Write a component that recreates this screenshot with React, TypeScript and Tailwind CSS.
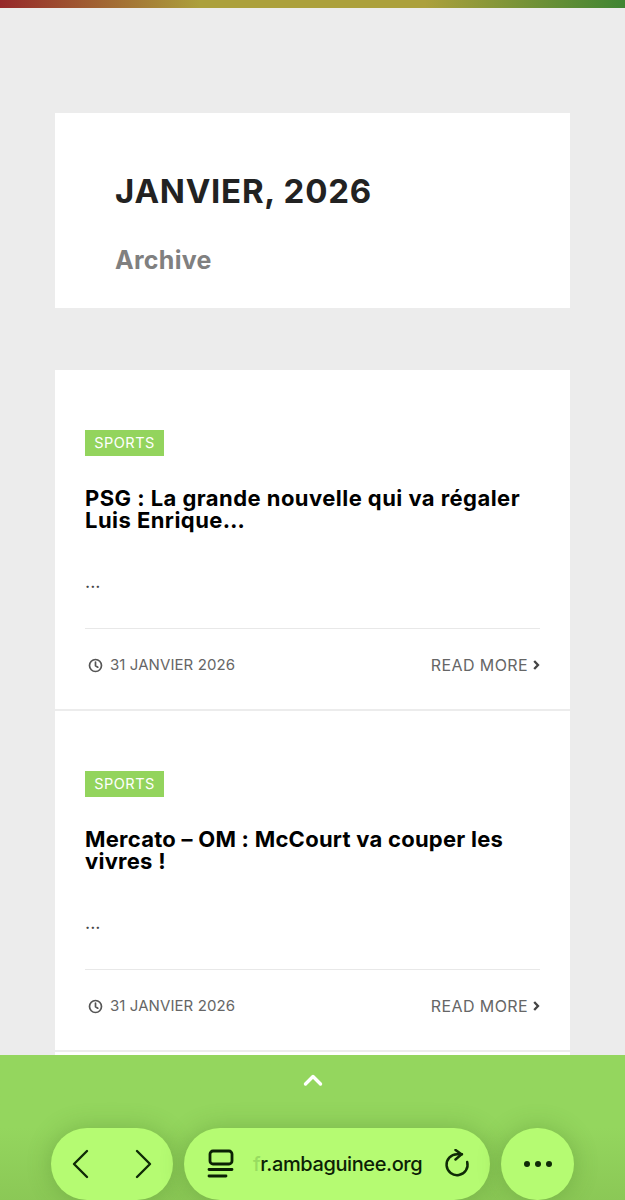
import React from "react";

const sans = "font-['Inter','Liberation_Sans',sans-serif]";

function Clock() {
  return (
    <svg width="15" height="15" viewBox="0 0 15 15" fill="none" stroke="#555" strokeWidth="1.7" strokeLinecap="round" strokeLinejoin="round">
      <circle cx="7.5" cy="7.5" r="6" />
      <path d="M7.5 4.2V7.8L9.8 9.2" />
    </svg>
  );
}

function Article({ title }: { title: React.ReactNode }) {
  return (
    <article className="h-[341px] border-b-2 border-[#ececec] px-[30px] pt-[60px] box-border">
      <span className="flex h-[26px] w-[79px] items-center justify-center bg-[#93d45d] text-[14.5px] tracking-[0.5px] text-white">SPORTS</span>
      {title}
      <p className="mt-[39px] h-[24px] text-[18px] leading-[24px] text-[#444]">...</p>
      <div className="mt-[34px] flex h-[73px] items-center justify-between border-t border-[#e8e8e8] pl-[3px] text-[#666]">
        <div className="flex items-center gap-[7px] pt-[1px] text-[15px] tracking-[0.08px]">
          <Clock />
          <span>31 JANVIER 2026</span>
        </div>
        <div className="flex items-center gap-[5px]">
          <span className="text-[16px] tracking-[0.4px]">READ MORE</span>
          <svg width="7" height="10" viewBox="0 0 7 10" fill="none" stroke="#444" strokeWidth="2.3"><path d="M1.2 1L5 5L1.2 9" /></svg>
        </div>
      </div>
    </article>
  );
}

export default function App() {
  return (
    <div className={`flex h-[1200px] w-[625px] flex-col overflow-hidden bg-[#ececec] ${sans}`}>
      <div className="h-[8px] shrink-0 bg-[linear-gradient(90deg,#96282a_0%,#aca03c_32%,#aca03c_68%,#3f8532_100%)]" />
      <main className="min-h-0 flex-1 overflow-hidden px-[55px] pt-[105px]">
        <section className="h-[195px] bg-white pl-[60px] pt-[58px]">
          <h1 className="text-[33px] font-bold leading-[40px] tracking-[0.75px] text-[#222]">JANVIER, 2026</h1>
          <p className="mt-[34px] text-[25px] font-bold leading-[30px] tracking-[0.3px] text-[#808080]">Archive</p>
        </section>
        <section className="mt-[62px] bg-white pb-[20px]">
          <Article title={<h2 className="mt-[31px] h-[44px] text-[22px] font-bold leading-[22px] tracking-[0.45px] text-black">PSG : La grande nouvelle qui va régaler<br />Luis Enrique…</h2>} />
          <Article title={<h2 className="mt-[31px] h-[44px] text-[22px] font-bold leading-[22px] tracking-[0.25px] text-black">Mercato – OM : McCourt va couper les<br />vivres !</h2>} />
        </section>
      </main>
      <footer className="flex h-[145px] shrink-0 flex-col items-center bg-gradient-to-b from-[#94d65e] via-[#94d65e] to-[#8bc856] px-[51px]">
        <svg className="mt-[18px]" width="20" height="14" viewBox="0 0 20 14" fill="none" stroke="#fff" strokeWidth="3.4" strokeLinecap="round" strokeLinejoin="round">
          <path d="M2.5 11L10 3.5L17.5 11" />
        </svg>
        <div className="mt-[41px] flex w-full items-start gap-[11px]">
          <div className="flex h-[72px] w-[122px] items-center justify-between rounded-[36px] bg-[#b5fb72] px-[20px] shadow-[0_0_24px_rgba(60,110,30,0.3)]">
            <svg width="20" height="30" viewBox="0 0 20 30" fill="none" stroke="#0f2a06" strokeWidth="2.4" strokeLinecap="round" strokeLinejoin="round"><path d="M16 2L3 15L16 28" /></svg>
            <svg width="20" height="30" viewBox="0 0 20 30" fill="none" stroke="#0f2a06" strokeWidth="2.4" strokeLinecap="round" strokeLinejoin="round"><path d="M4 2L17 15L4 28" /></svg>
          </div>
          <div className="flex h-[72px] flex-1 items-center rounded-[36px] bg-[#b5fb72] pl-[23px] pr-[20px] shadow-[0_0_24px_rgba(60,110,30,0.3)]">
            <svg width="28" height="30" viewBox="0 0 28 30" fill="none" stroke="#0b2004" strokeWidth="2.8" strokeLinecap="round">
              <rect x="3" y="2" width="22" height="13" rx="3" />
              <path d="M2 20.5H25M2 27H19" />
            </svg>
            <span className="ml-[18px] flex-1 text-[20px] font-medium tracking-[-0.4px] text-[#0c1f05]">
              <span className="text-[#98dc60]">f</span>r.ambaguinee.org
            </span>
            <svg width="26" height="30" viewBox="0 0 26 30" fill="none" stroke="#0f2a06" strokeWidth="2.5" strokeLinecap="round" strokeLinejoin="round">
              <path d="M23.2 13A10.5 10.5 0 1 1 13 5.2H18" />
              <path d="M11.5 1L17.5 5.3L11.5 10.5" />
            </svg>
          </div>
          <div className="flex h-[72px] w-[73px] items-center justify-center gap-[5px] rounded-[36px] bg-[#b5fb72] shadow-[0_0_24px_rgba(60,110,30,0.3)]">
            <span className="h-[6px] w-[6px] rounded-full bg-[#0f2a06]" />
            <span className="h-[6px] w-[6px] rounded-full bg-[#0f2a06]" />
            <span className="h-[6px] w-[6px] rounded-full bg-[#0f2a06]" />
          </div>
        </div>
      </footer>
    </div>
  );
}
